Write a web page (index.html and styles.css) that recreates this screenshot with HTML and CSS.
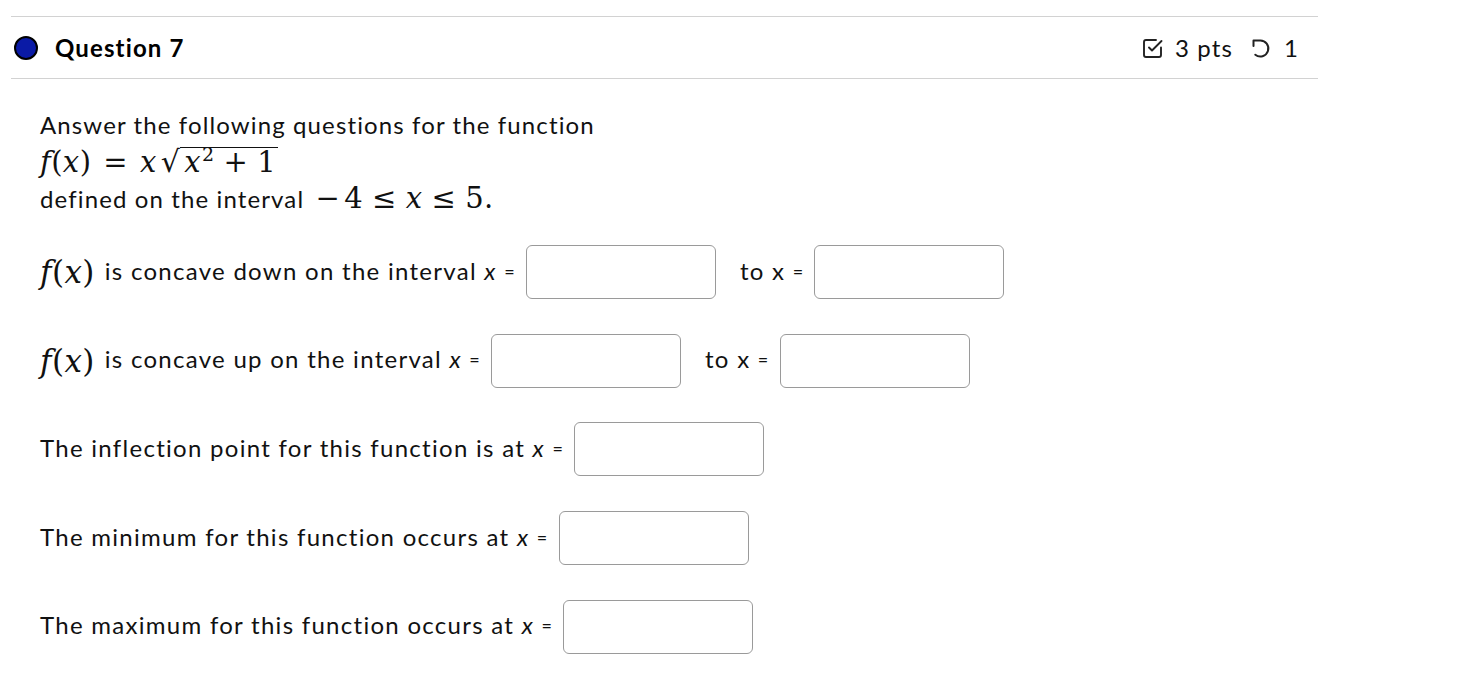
FILE: index.html
```html
<!DOCTYPE html>
<html lang="en">
<head>
<meta charset="utf-8">
<title>Question 7</title>
<link rel="stylesheet" href="styles.css">
</head>
<body>
<div class="question">
  <div class="q-header">
    <div class="q-title">
      <span class="dot"></span>
      <span class="q-name">Question 7</span>
    </div>
    <div class="q-meta">
      <svg class="ico" viewBox="0 0 24 24" width="24" height="24" aria-hidden="true">
        <path d="M20 11.5V19a2 2 0 0 1-2 2H5a2 2 0 0 1-2-2V6a2 2 0 0 1 2-2h10" fill="none" stroke="#222" stroke-width="1.9" stroke-linecap="round" stroke-linejoin="round"/>
        <path d="M8 11.5l3 3L20.5 5" fill="none" stroke="#222" stroke-width="1.9" stroke-linecap="round" stroke-linejoin="round"/>
      </svg>
      <span class="pts">3 pts</span>
      <svg class="ico ico-undo" viewBox="0 0 24 24" width="24" height="24" aria-hidden="true">
        <path d="M7.3 18.7A8 8 0 1 0 12 4.5H5.5V10" fill="none" stroke="#222" stroke-width="2" stroke-linecap="round" stroke-linejoin="round"/>
      </svg>
      <span class="attempts">1</span>
    </div>
  </div>

  <div class="q-body">
    <div class="intro">
      <div>Answer the following questions for the function</div>
      <div class="math formula"><i>f</i>(<i>x</i>)<span class="op">=</span><i>x</i><span class="sqrt"><span class="rad">√</span><span class="under"><i>x</i><sup>2</sup><span class="op2">+</span>1</span></span></div>
      <div>defined on the interval <span class="math interval"><span class="minus">−</span>4<span class="op">≤</span><i>x</i><span class="op">≤</span>5.</span></div>
    </div>

    <div class="rows">
      <div class="row">
        <span class="math fx"><i>f</i>(<i>x</i>)</span>
        <span class="lbl">is concave down on the interval <span class="var">x</span> <span class="eq">=</span></span>
        <input class="ans" type="text">
        <span class="lbl to">to <span class="var up">x</span> <span class="eq">=</span></span>
        <input class="ans" type="text">
      </div>
      <div class="row">
        <span class="math fx"><i>f</i>(<i>x</i>)</span>
        <span class="lbl">is concave up on the interval <span class="var">x</span> <span class="eq">=</span></span>
        <input class="ans" type="text">
        <span class="lbl to">to <span class="var up">x</span> <span class="eq">=</span></span>
        <input class="ans" type="text">
      </div>
      <div class="row">
        <span class="lbl">The inflection point for this function is at <span class="var">x</span> <span class="eq">=</span></span>
        <input class="ans" type="text">
      </div>
      <div class="row">
        <span class="lbl">The minimum for this function occurs at <span class="var">x</span> <span class="eq">=</span></span>
        <input class="ans" type="text">
      </div>
      <div class="row">
        <span class="lbl">The maximum for this function occurs at <span class="var">x</span> <span class="eq">=</span></span>
        <input class="ans" type="text">
      </div>
    </div>
  </div>
</div>
</body>
</html>
```
FILE: styles.css
```css
html, body {
  margin: 0;
  padding: 0;
  background: #fff;
}

body {
  font-family: Lato, "Open Sans", "DejaVu Sans", sans-serif;
  font-size: 24px;
  letter-spacing: 1.12px;
  color: #111;
}

.question {
  width: 1307px;
  margin: 16px 0 0 11px;
}

.q-header {
  display: flex;
  align-items: center;
  justify-content: space-between;
  height: 61px;
  border-top: 1px solid #d2d2d2;
  border-bottom: 1px solid #d2d2d2;
  padding: 0 19px 0 3px;
}

.q-title {
  display: flex;
  align-items: center;
}

.dot {
  width: 20px;
  height: 20px;
  border-radius: 50%;
  background: #0a1aa6;
  border: 2px solid #000;
  margin-right: 17px;
}

.q-name {
  font-weight: 700;
  color: #000;
}

.q-meta {
  display: flex;
  align-items: center;
  color: #111;
}

.ico {
  display: block;
  width: 24px;
  height: 24px;
}

.pts {
  margin-left: 10px;
  margin-right: 15px;
}

.attempts {
  margin-left: 12px;
}

.q-body {
  padding: 27px 0 0 29px;
}

.intro {
  line-height: 37px;
}

.math {
  font-family: "DejaVu Serif", "Liberation Serif", serif;
  font-size: 29px;
  letter-spacing: 0.4px;
}

.math i {
  font-style: italic;
}

.formula {
  display: flex;
  align-items: baseline;
  height: 37px;
}

.op {
  margin: 0 9px;
}

.formula .op {
  margin: 0 12px;
}

.op2 {
  margin: 0 9px;
}

.sqrt {
  display: inline-flex;
  align-items: baseline;
  margin-left: 4px;
}

.rad {
  font-family: "DejaVu Sans", sans-serif;
  font-size: 30px;
}

.under {
  border-top: 1.5px solid #111;
  line-height: 29px;
  padding-left: 4px;
  padding-right: 2px;
}

.under sup {
  font-size: 19px;
  line-height: 0;
  vertical-align: 11px;
  margin-left: 1px;
}

.interval .minus {
  margin-right: 4px;
  margin-left: 4px;
}

.rows {
  display: flex;
  flex-direction: column;
  gap: 34.7px;
  margin-top: 28px;
}

.row {
  display: flex;
  align-items: center;
  height: 54px;
}

.fx {
  font-size: 31px;
  margin-right: 10px;
}

.lbl {
  white-space: nowrap;
  position: relative;
  top: -2px;
  letter-spacing: 1.28px;
}

.var {
  font-style: italic;
}

.var.up {
  font-style: normal;
}

.eq {
  font-size: 18px;
  vertical-align: 2px;
}

.to {
  margin-left: 24px;
}

.ans {
  box-sizing: border-box;
  width: 190px;
  height: 54px;
  margin: 0 0 0 10px;
  border: 1px solid #9a9a9a;
  border-radius: 6px;
  background: #fff;
  padding: 0 8px;
  font: inherit;
  outline: none;
}
```
